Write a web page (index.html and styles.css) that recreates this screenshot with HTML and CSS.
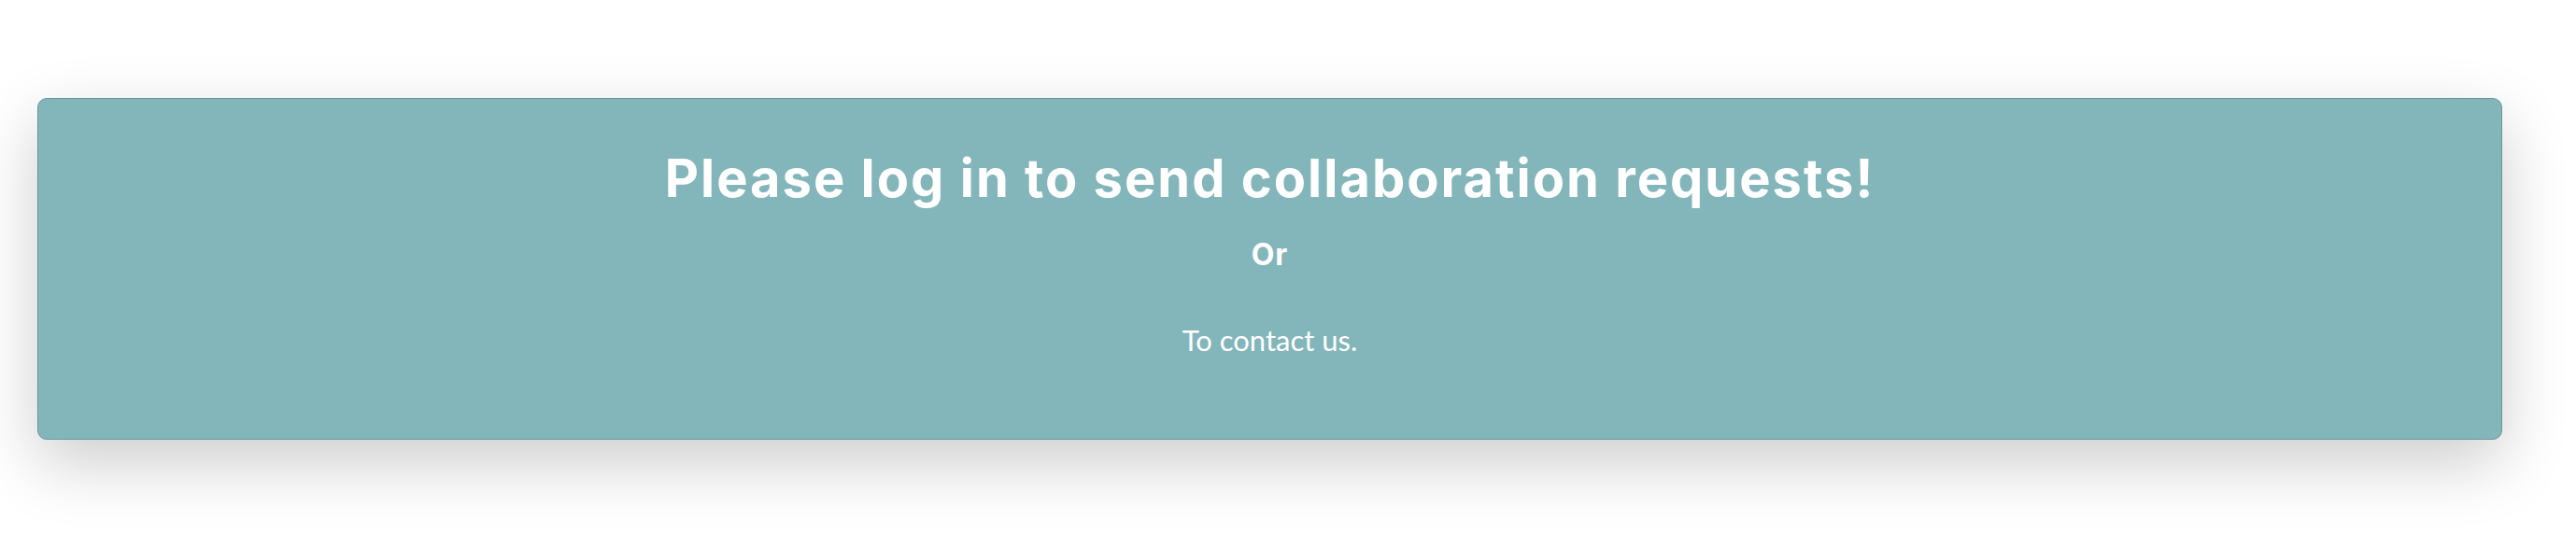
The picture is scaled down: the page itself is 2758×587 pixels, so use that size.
FILE: index.html
```html
<!DOCTYPE html>
<html lang="en">
<head>
<meta charset="utf-8">
<title>Collaboration</title>
<link rel="stylesheet" href="styles.css">
</head>
<body>
<main class="page">
  <section class="notice">
    <h2 class="notice-title">Please log in to send collaboration requests!</h2>
    <h5 class="notice-or">Or</h5>
    <p class="notice-text">To contact us.</p>
  </section>
</main>
</body>
</html>
```
FILE: styles.css
```css
html, body {
  margin: 0;
  padding: 0;
  background: #ffffff;
}
.page {
  padding: 105px 79px 116px 40px;
}
.notice {
  box-sizing: border-box;
  height: 366px;
  background: #83b6ba;
  border: 1px solid #6b9599;
  border-radius: 10px;
  box-shadow: 0 25px 70px rgba(0, 0, 0, 0.2);
  display: flex;
  flex-direction: column;
  align-items: center;
  padding-top: 52px;
  color: #ffffff;
}
.notice-title {
  margin: 0;
  font-family: Inter, "Noto Sans", sans-serif;
  font-weight: 700;
  font-size: 56px;
  line-height: 67px;
  letter-spacing: 2px;
}
.notice-or {
  margin: 30px 0 0 0;
  font-family: Inter, "Noto Sans", sans-serif;
  font-weight: 700;
  font-size: 32px;
  line-height: 35px;
  letter-spacing: 1px;
}
.notice-text {
  margin: 57px 0 0 0;
  font-family: Lato, "Noto Sans", sans-serif;
  font-weight: 400;
  font-size: 31px;
  line-height: 35px;
}
```
